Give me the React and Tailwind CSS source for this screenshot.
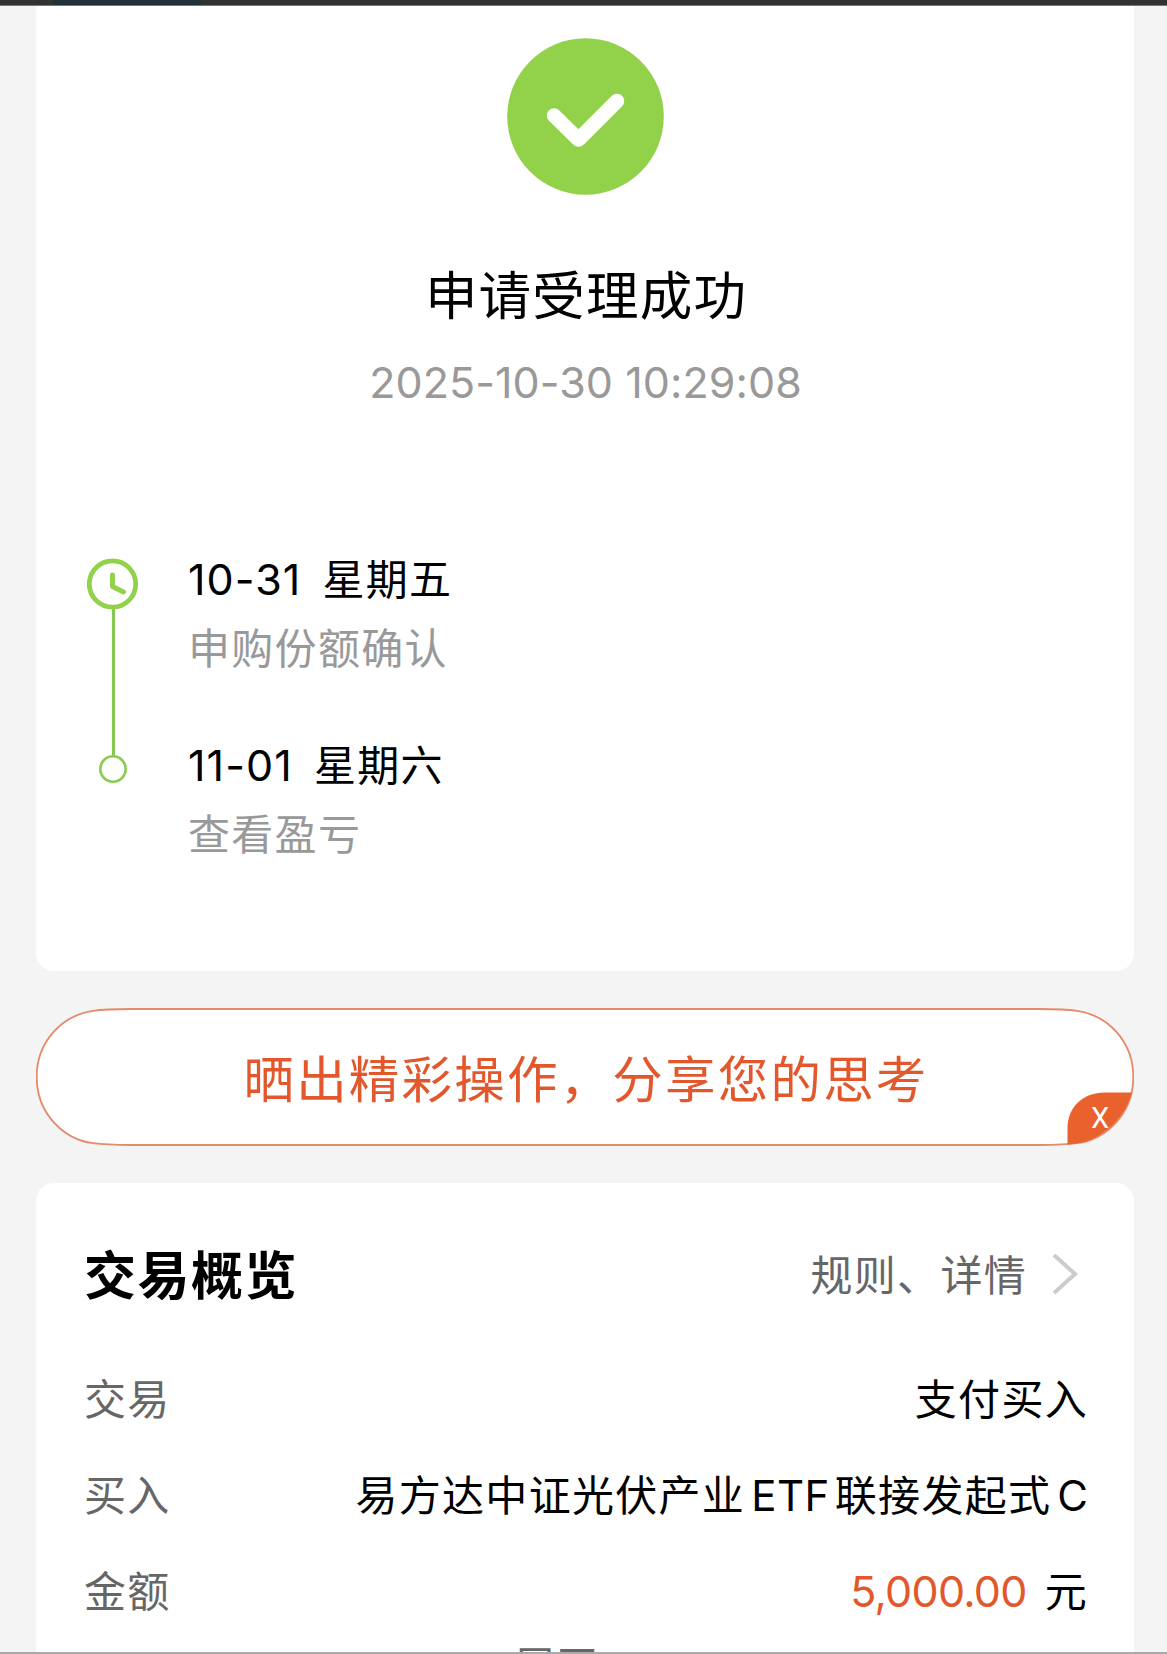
const steps = [
    { date: "10-31", day: "星期五", text: "申购份额确认" },
    { date: "11-01", day: "星期六", text: "查看盈亏" },
];

function SuccessIcon() {
    return (
        <svg className="w-[157px] h-[157px]" viewBox="0 0 157 157" fill="none">
            <circle cx="78.5" cy="78.5" r="78.3" fill="#92d14a" />
            <path d="M47 77.500L71.500 101.500L110 63" stroke="#fff" strokeWidth="14.500" strokeLinecap="round" strokeLinejoin="round" />
        </svg>
    );
}

function TimelineRail() {
    return (
        <svg className="w-[52px] h-[228px] shrink-0" viewBox="0 0 52 228" fill="none">
            <path d="M26.500 50V199" stroke="#88c852" strokeWidth="3.200" />
            <circle cx="25.500" cy="26" r="23.200" stroke="#92d14a" strokeWidth="4.800" />
            <path d="M25.500 17V28.500L36.500 34" stroke="#92d14a" strokeWidth="5" strokeLinecap="round" strokeLinejoin="round" />
            <circle cx="26" cy="211" r="12.700" fill="#fff" stroke="#88cc50" strokeWidth="2.600" />
        </svg>
    );
}

function ShareBanner() {
    return (
        <div className="relative mt-[37px] h-[138px] flex items-center justify-center">
            <svg className="absolute inset-0 w-full h-full" viewBox="0 0 1098 138" fill="none">
                <path
                    d="M95 1H1003C1019 1 1030 1.200 1041 2.800C1071 7 1097.300 33 1097.300 69C1097.300 105 1071 131 1041 135.200C1030 136.800 1019 137 1003 137H95C79 137 68 136.800 57 135.200C27 131 0.700 105 0.700 69C0.700 33 27 7 57 2.800C68 1.200 79 1 95 1Z"
                    fill="#fff"
                    stroke="#e58a68"
                    strokeWidth="1.800"
                />
                <path d="M1031.500 136.500V120C1031.500 99 1047 84.500 1069 84.500H1096C1089 110 1067 131.500 1041 135.500Z" fill="#e9622d" />
            </svg>
            <span className="relative top-[3px] left-px text-[50.500px] leading-[60px] tracking-[2.200px] text-[#e2582c]">晒出精彩操作，分享您的思考</span>
            <button className="absolute left-[1050px] top-[94px] w-[28px] text-center font-['Roboto',sans-serif] text-[29px] leading-[32px] text-white">X</button>
        </div>
    );
}

function Row({ label, children }) {
    return (
        <div className="flex items-center justify-between h-[96px] text-[42px] tracking-[1.300px]">
            <span className="text-[#666]">{label}</span>
            <span className="text-black">{children}</span>
        </div>
    );
}

export default function App() {
    return (
        <div className="w-full h-[1654px] overflow-hidden flex flex-col bg-[#f4f4f4] font-['Inter','Noto_Sans_CJK_SC',sans-serif]">
            <div className="h-[6px] shrink-0 bg-[#323232] border-b border-[#777] flex">
                <div className="ml-[53px] w-[148px] bg-[#213039]" />
            </div>

            <div className="flex-1 min-h-0 overflow-hidden pl-[36px] pr-[33px]">
                <div className="h-[965px] bg-white rounded-b-[18px] pt-[32px]">
                    <div className="flex flex-col items-center">
                        <SuccessIcon />
                        <h1 className="mt-[66px] pl-[2px] text-[52.500px] leading-[70px] tracking-[1.200px] text-black font-normal">申请受理成功</h1>
                        <p className="mt-[21px] pl-px text-[43px] leading-[60px] tracking-[0.080px] text-[#999]">2025-10-30 10:29:08</p>
                    </div>

                    <div className="flex mt-[146px] pl-[51px]">
                        <TimelineRail />
                        <div className="ml-[49px] -mt-[8px]">
                            {steps.map((s) => (
                                <div key={s.date} className="h-[185.500px]">
                                    <div className="flex gap-[21px] text-[43px] leading-[60px] text-black">
                                        <span className="-mt-px mb-px tracking-[1.100px]">{s.date}</span>
                                        <span className="text-[42px] tracking-[1.300px]">{s.day}</span>
                                    </div>
                                    <div className="mt-[9px] text-[42px] leading-[60px] tracking-[1.300px] text-[#999]">{s.text}</div>
                                </div>
                            ))}
                        </div>
                    </div>
                </div>

                <ShareBanner />

                <div className="mt-[37px] h-[520px] bg-white rounded-t-[18px] pt-[62px] pl-[48px] pr-[46px]">
                    <div className="flex items-center justify-between h-[60px] mb-[46px]">
                        <h2 className="mt-[3px] text-[52px] leading-[60px] tracking-[1.500px] font-bold text-black">交易概览</h2>
                        <div className="flex items-center gap-[25px] pr-[10px] text-[42px] leading-[60px] tracking-[1.300px] text-[#666]">
                            <span className="mt-px">规则、详情</span>
                            <svg className="w-[26px] h-[42px]" viewBox="0 0 26 42" fill="none">
                                <path d="M2 1L23 20L2 39" stroke="#ccc" strokeWidth="4" />
                            </svg>
                        </div>
                    </div>
                    <Row label="交易">支付买入</Row>
                    <Row label="买入">
                        易方达中证光伏产业<span className="ml-[6px] mr-[5px] tracking-[0.500px]">ETF</span>联接发起式<span className="ml-[6px] tracking-normal">C</span>
                    </Row>
                    <Row label="金额">
                        <span className="text-[43px] tracking-[-0.700px] text-[#e2582c] mr-[18px]">5,000.00</span>元
                    </Row>
                    <div className="-mt-[3px] pl-[430px] text-[41px] leading-[60px] tracking-[1.500px] text-[#666]">展开</div>
                </div>
            </div>

            <div className="h-[2px] shrink-0 bg-[#aaa]" />
        </div>
    );
}
